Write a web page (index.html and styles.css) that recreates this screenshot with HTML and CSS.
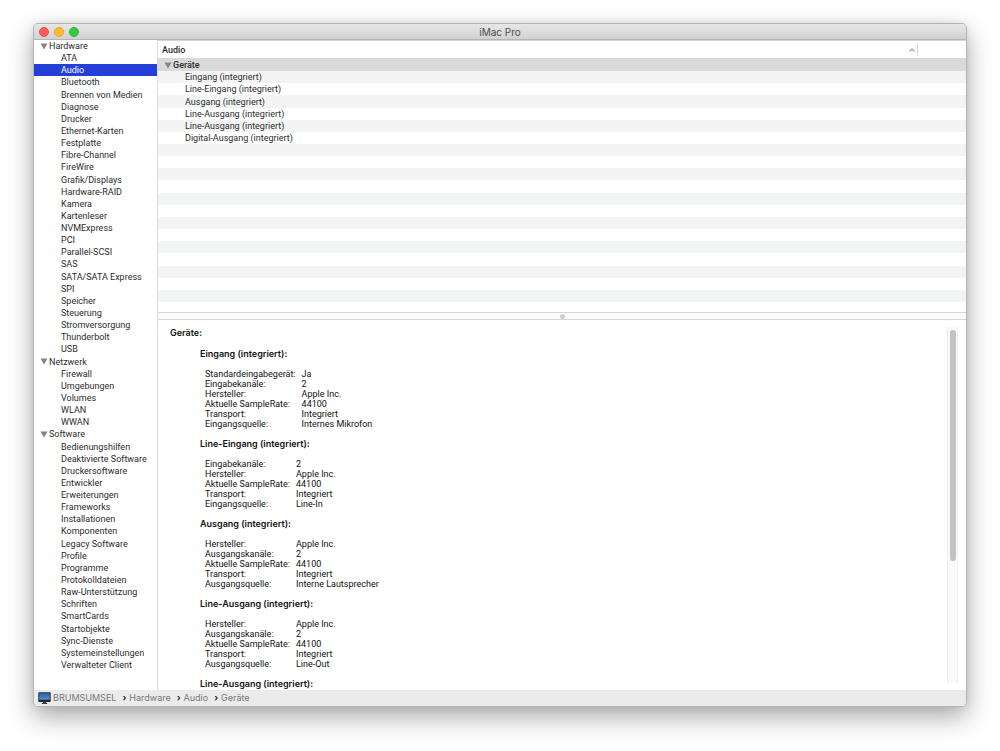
FILE: index.html
```html
<!DOCTYPE html>
<html lang="de">
<head>
<meta charset="utf-8">
<title>iMac Pro</title>
<link rel="stylesheet" href="styles.css">
</head>
<body>
<main class="window">
  <header class="titlebar">
    <div class="lights">
      <button class="light close" aria-label="Schließen"></button>
      <button class="light minimize" aria-label="Minimieren"></button>
      <button class="light maximize" aria-label="Maximieren"></button>
    </div>
    <h1 class="title">iMac Pro</h1>
  </header>
  <div class="content">
    <nav class="sidebar" id="sidebar" aria-label="Kategorien"></nav>
    <div class="panes">
      <section class="devices">
        <div class="column-head">
          <span class="column-name">Audio</span>
          <svg class="sort" viewBox="0 0 6 4" aria-hidden="true"><path d="M0.5 3.3 3 1 5.5 3.3" fill="none" stroke="#999" stroke-width="1.1"/></svg>
          <span class="column-end"></span>
        </div>
        <table class="device-table" aria-label="Audio"><tbody class="device-rows" id="devices"></tbody></table>
      </section>
      <div class="splitter"><span class="grip"></span></div>
      <section class="details">
        <div class="report" id="report">
          <h2 class="report-title">Geräte:</h2>
        </div>
        <div class="track"><div class="thumb"></div></div>
      </section>
    </div>
  </div>
  <footer class="pathbar">
    <svg class="mac" viewBox="0 0 13 12" aria-hidden="true">
      <defs><linearGradient id="screen" x1="0" y1="0" x2="0" y2="1"><stop offset="0" stop-color="#2c5d9c"/><stop offset="1" stop-color="#4b93dd"/></linearGradient></defs>
      <rect x="0.3" y="0.3" width="12.4" height="9.6" rx="0.6" fill="#24272b"/>
      <rect x="1.2" y="1.1" width="10.6" height="6.6" fill="url(#screen)"/>
      <path d="M4.8 9.7h3.4v1.2h1v1H3.8v-1h1z" fill="#3b3d40"/>
    </svg>
    <span class="crumb">BRUMSUMSEL</span>
    <span class="sep">›</span><span class="crumb">Hardware</span>
    <span class="sep">›</span><span class="crumb">Audio</span>
    <span class="sep">›</span><span class="crumb">Geräte</span>
  </footer>
</main>
<script src="app.js"></script>
</body>
</html>
```
FILE: styles.css
```css
* { box-sizing: border-box; }
body {
  margin: 0;
  height: 100vh;
  padding: 23px 33px 44px;
  background: #fff;
  color: #2b2b2b;
  font: 9px/12px Roboto, "Liberation Sans", sans-serif;
}
.window {
  display: flex;
  flex-direction: column;
  height: 100%;
  border: 1px solid #b4b4b4;
  border-radius: 5px;
  overflow: hidden;
  background: #fff;
  box-shadow: 0 10px 26px rgba(0, 0, 0, 0.34), 0 0 8px rgba(0, 0, 0, 0.08);
}
.titlebar {
  display: grid;
  grid-template-columns: 1fr auto 1fr;
  align-items: center;
  flex: none;
  height: 16px;
  padding: 0 5px;
  border-bottom: 1px solid #b5b5b5;
  background: linear-gradient(#e6e6e6, #d2d2d2);
}
.lights { display: flex; gap: 5px; }
.light {
  width: 10px;
  height: 10px;
  padding: 0;
  border: 1px solid;
  border-radius: 50%;
}
.close { background: #fc5b57; border-color: #e5504b; }
.minimize { background: #fcbb2f; border-color: #e2a42c; }
.maximize { background: #36c93e; border-color: #2bb234; }
.title { margin: 0; font-family: Inter, "Liberation Sans", sans-serif; font-size: 10px; font-weight: 400; color: #4d4d4d; }
.content { display: flex; flex: 1; min-height: 0; }
.sidebar {
  display: grid;
  grid-auto-rows: 1fr;
  flex: none;
  width: 124px;
  padding-bottom: 19px;
  border-right: 1px solid #dedede;
}
.group, .item {
  display: flex;
  align-items: center;
  padding: 0;
  border: 0;
  background: none;
  color: inherit;
  font: inherit;
  text-align: left;
}
.group { gap: 1px; padding-left: 6px; }
.item { padding-left: 27px; text-decoration: none; }
.item.selected { background: #243fd8; color: #fff; }
.arrow { width: 8px; height: 7px; flex: none; }
.panes { display: flex; flex-direction: column; flex: 1; min-width: 0; }
.devices { flex: none; border-top: 1px solid #d6d6d6; }
.column-head {
  display: flex;
  align-items: center;
  height: 18px;
  padding-left: 4px;
  border-bottom: 1px solid #d8d8d8;
}
.column-name { flex: 1; font-weight: 500; }
.sort { width: 6px; height: 4px; margin-right: 2px; }
.column-end { width: 49px; height: 13px; border-left: 1px solid #dedede; }
.device-table { display: block; padding-bottom: 10px; }
.device-rows { display: grid; grid-auto-rows: 1fr; height: 243px; }
.device-row { display: flex; align-items: center; }
.device-row:nth-child(even) { background: #f3f5f5; }
.device-row.root { background: #dadada; }
.device { display: flex; align-items: center; padding: 0 0 0 27px; }
.root .device { gap: 1px; padding-left: 6px; font-weight: 500; }
.splitter {
  display: flex;
  align-items: center;
  justify-content: center;
  flex: none;
  height: 8px;
  border: solid #d6d6d6;
  border-width: 1px 0;
  background: #fbfbfb;
}
.grip { width: 5px; height: 5px; border-radius: 50%; background: #cfcfcf; }
.details {
  display: flex;
  flex: 1;
  min-height: 0;
  padding-right: 8px;
}
.report { flex: 1; padding: 7px 0 0 12px; overflow: hidden; color: #111; }
.report-title, .device-name {
  margin: 0 0 9px;
  font: 600 9px/12px Inter, "Liberation Sans", sans-serif;
}
.device-info { padding-left: 30px; margin-bottom: 9px; }
.facts { margin-left: 5px; border-collapse: collapse; line-height: 10px; }
.facts th { padding: 0 6px 0 0; font-weight: 400; text-align: left; }
.facts td { padding: 0; }
.track {
  flex: none;
  width: 11px;
  margin: 7px 0;
  padding: 3px 2px;
  border-left: 1px solid #ededed;
  border-right: 1px solid #f2f2f2;
  background: #fafafa;
}
.thumb { width: 6px; height: 66%; border-radius: 3px; background: #c2c2c2; }
.pathbar {
  display: flex;
  align-items: center;
  flex: none;
  height: 16px;
  padding-left: 4px;
  background: #ebebeb;
  color: #787878;
  font-family: Inter, "Liberation Sans", sans-serif;
}
.mac { width: 13px; height: 12px; margin-right: 2px; }
.sep { margin: 0 3px 0 6px; color: #222; font-weight: 700; }
```
FILE: app.js
```javascript
const categories = {
  Hardware: ["ATA", "Audio", "Bluetooth", "Brennen von Medien", "Diagnose", "Drucker", "Ethernet-Karten", "Festplatte", "Fibre-Channel", "FireWire", "Grafik/Displays", "Hardware-RAID", "Kamera", "Kartenleser", "NVMExpress", "PCI", "Parallel-SCSI", "SAS", "SATA/SATA Express", "SPI", "Speicher", "Steuerung", "Stromversorgung", "Thunderbolt", "USB"],
  Netzwerk: ["Firewall", "Umgebungen", "Volumes", "WLAN", "WWAN"],
  Software: ["Bedienungshilfen", "Deaktivierte Software", "Druckersoftware", "Entwickler", "Erweiterungen", "Frameworks", "Installationen", "Komponenten", "Legacy Software", "Profile", "Programme", "Protokolldateien", "Raw-Unterstützung", "Schriften", "SmartCards", "Startobjekte", "Sync-Dienste", "Systemeinstellungen", "Verwalteter Client"]
};
const reports = [
  ["Eingang (integriert)", [["Standardeingabegerät", "Ja"], ["Eingabekanäle", "2"], ["Hersteller", "Apple Inc."], ["Aktuelle SampleRate", "44100"], ["Transport", "Integriert"], ["Eingangsquelle", "Internes Mikrofon"]]],
  ["Line-Eingang (integriert)", [["Eingabekanäle", "2"], ["Hersteller", "Apple Inc."], ["Aktuelle SampleRate", "44100"], ["Transport", "Integriert"], ["Eingangsquelle", "Line-In"]]],
  ["Ausgang (integriert)", [["Hersteller", "Apple Inc."], ["Ausgangskanäle", "2"], ["Aktuelle SampleRate", "44100"], ["Transport", "Integriert"], ["Ausgangsquelle", "Interne Lautsprecher"]]],
  ["Line-Ausgang (integriert)", [["Hersteller", "Apple Inc."], ["Ausgangskanäle", "2"], ["Aktuelle SampleRate", "44100"], ["Transport", "Integriert"], ["Ausgangsquelle", "Line-Out"]]],
  ["Line-Ausgang (integriert)", []]
];
const arrow = '<svg class="arrow" viewBox="0 0 8 7" aria-hidden="true"><path d="M0.5 0.5h7L4 6.5z" fill="#858585"/></svg>';

document.getElementById("sidebar").innerHTML = Object.entries(categories).map(([group, items]) =>
  `<button class="group" aria-expanded="true">${arrow}${group}</button>` +
  items.map(name => `<a class="item${name === "Audio" ? " selected" : ""}" href="#">${name}</a>`).join("")
).join("");

const devices = [...reports.map(([name]) => name), "Digital-Ausgang (integriert)"];
const blankRows = 13;
document.getElementById("devices").innerHTML =
  `<tr class="device-row root"><td class="device">${arrow}Geräte</td></tr>` +
  devices.concat(Array(blankRows).fill("")).map(name => `<tr class="device-row"><td class="device">${name}</td></tr>`).join("");

document.getElementById("report").insertAdjacentHTML("beforeend", reports.map(([name, facts]) =>
  `<article class="device-info"><h3 class="device-name">${name}:</h3><table class="facts"><tbody>` +
  facts.map(([label, value]) => `<tr><th scope="row">${label}:</th><td>${value}</td></tr>`).join("") +
  "</tbody></table></article>"
).join(""));
```
